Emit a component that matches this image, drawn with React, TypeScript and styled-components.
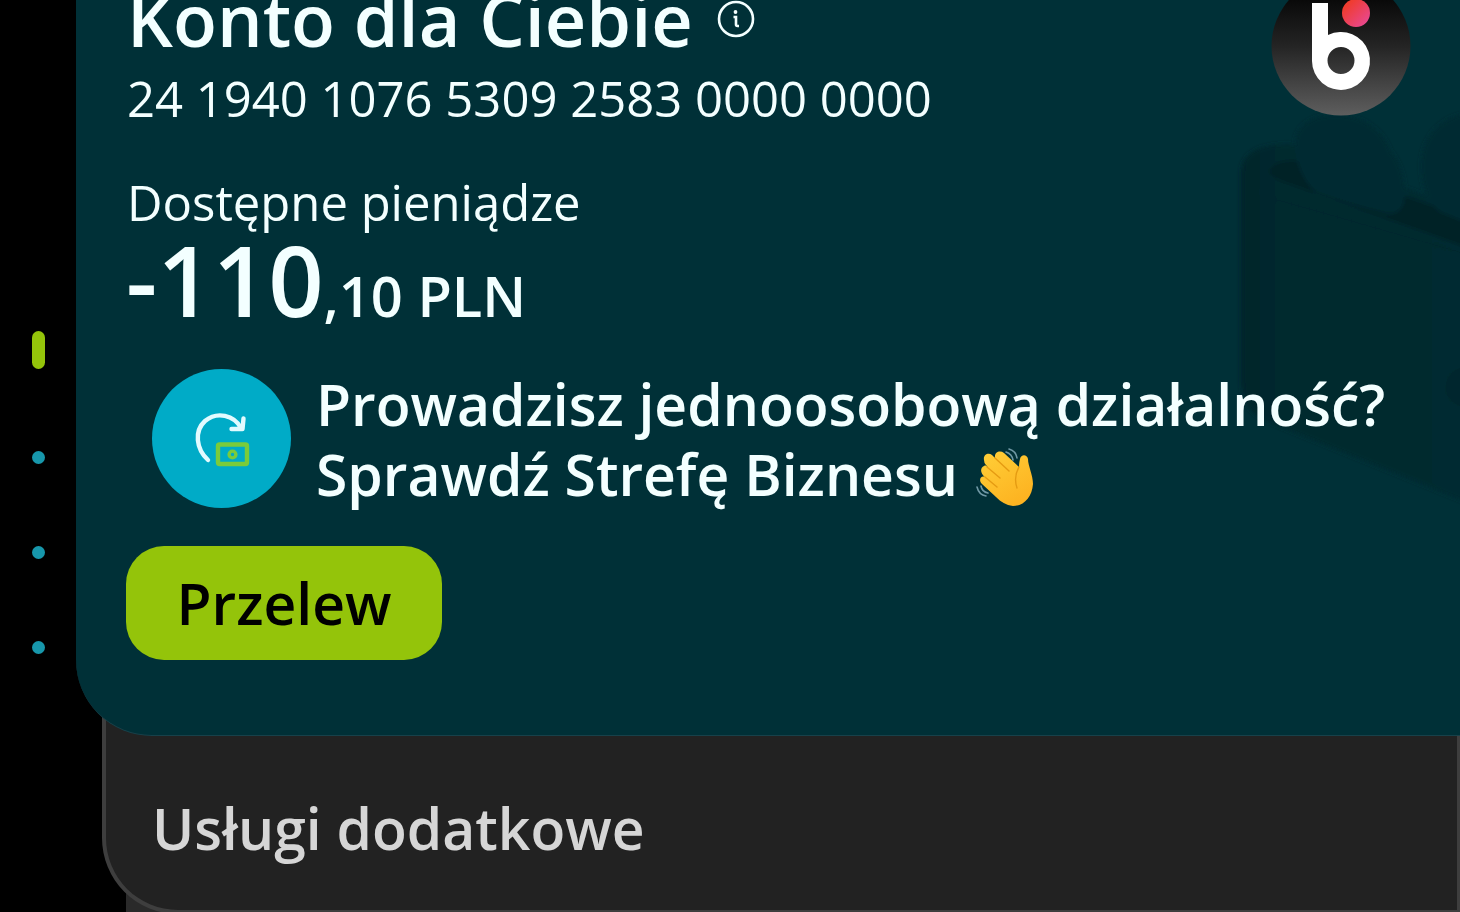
import React from "react";
import styled, { createGlobalStyle } from "styled-components";

const GlobalStyle = createGlobalStyle`
  * { box-sizing: border-box; }
  body {
    margin: 0;
    background: #000;
    font-family: "Open Sans", "Noto Sans", sans-serif;
    color: #f3ffff;
  }
`;

const Page = styled.div`
  display: flex;
  overflow: hidden;
`;

const Rail = styled.nav`
  flex: 0 0 76px;
  display: flex;
  flex-direction: column;
  align-items: center;
  gap: 82px;
  padding-top: 331px;
`;

const PageDot = styled.button<{ $active?: boolean }>`
  width: 13px;
  height: ${(p) => (p.$active ? 38 : 13)}px;
  padding: 0;
  border: 0;
  border-radius: 7px;
  background: ${(p) => (p.$active ? "#94c40a" : "#1797ab")};
`;

const Stack = styled.main`
  flex: 1;
  min-width: 0;
  display: flex;
  flex-direction: column;
`;

const AccountCard = styled.section`
  position: relative;
  z-index: 2;
  padding: 0 49px 75px 50px;
  background: #003037;
  border-bottom: 1px solid #17414a;
  border-bottom-left-radius: 76px;
`;

const Backdrop = styled.svg`
  position: absolute;
  z-index: -1;
  right: 0;
  top: 100px;
  width: 230px;
  height: 420px;
`;

const Header = styled.header`
  display: flex;
  justify-content: space-between;
  align-items: flex-start;
`;

const AccountInfo = styled.div`
  padding-left: 1px;
`;

const TitleRow = styled.div`
  display: flex;
  align-items: center;
  gap: 24px;
`;

const Title = styled.h1`
  margin: 0;
  font-size: 72px;
  line-height: 38px;
  font-weight: 600;
  white-space: nowrap;
`;

const InfoButton = styled.button`
  display: flex;
  padding: 0;
  border: 0;
  background: none;
  color: inherit;
`;

const AccountNumber = styled.p`
  margin: 32px 0 0;
  font-size: 49px;
  line-height: 56px;
`;

const BalanceLabel = styled.p`
  margin: 48px 0 0;
  padding-left: 1px;
  font-size: 49px;
  line-height: 56px;
`;

const Balance = styled.p`
  margin: 0;
  font-size: 97px;
  line-height: 98px;
  font-weight: 600;
`;

const Cents = styled.span`
  font-size: 56px;
  line-height: 56px;
`;

const Notice = styled.a`
  display: flex;
  gap: 25px;
  margin: 41px 0 38px;
  padding-left: 26px;
  color: inherit;
  text-decoration: none;
  font-size: 57px;
  line-height: 70px;
  font-weight: 600;
`;

const NoticeIcon = styled.span`
  flex: 0 0 139px;
  height: 139px;
  border-radius: 50%;
  background: #00abc7;
`;

const NoticeText = styled.span`
  flex: 1;
  height: 139px;
  white-space: nowrap;
`;

const Wave = styled.svg`
  width: 64px;
  height: 64px;
  vertical-align: -14px;
`;

const TransferButton = styled.button`
  display: block;
  width: 316px;
  height: 114px;
  padding: 0;
  border: 0;
  border-radius: 38px;
  background: #94c40a;
  color: #000;
  font: 600 57px/68px "Open Sans", "Noto Sans", sans-serif;
`;

const ServicesCard = styled.section`
  position: relative;
  z-index: 1;
  margin: -80px 0 0 26px;
  padding: 134px 46px 48px;
  border: 4px solid #3e3e3e;
  border-right-width: 3px;
  border-bottom-left-radius: 76px;
  background: #222;
`;

const ServicesTitle = styled.h2`
  margin: 0;
  color: #d6d6d6;
  font-size: 57px;
  line-height: 68px;
  font-weight: 600;
`;

const NextCard = styled.div`
  height: 82px;
  margin: -80px 0 0 50px;
  background: #2a2a2a;
`;

function ProductBackdrop() {
  return (
    <Backdrop viewBox="1230 100 230 420" aria-hidden="true">
      <defs>
        <linearGradient id="box" x1="0" x2="1" y1="0" y2="0">
          <stop offset="0" stopColor="#00242a" />
          <stop offset=".06" stopColor="#00262c" />
          <stop offset=".16" stopColor="#00292f" />
          <stop offset="1" stopColor="#002a30" />
        </linearGradient>
        <filter id="soft"><feGaussianBlur stdDeviation="2" /></filter>
      </defs>
      <g filter="url(#soft)">
        <path d="M1241 173Q1241 144 1290 144L1480 216V508L1266 421Q1241 411 1241 380Z" fill="url(#box)" />
        <path d="M1256 194Q1300 206 1480 258" stroke="#00272d" strokeWidth="2" fill="none" />
        <path d="M1270 170Q1276 158 1304 162L1480 222V252L1290 184Q1268 177 1270 170Z" fill="#002228" />
        <path d="M1295 142C1297 122 1316 114 1338 115C1366 116 1384 132 1391 152C1399 160 1408 182 1404 202Q1401 214 1388 214Q1352 205 1316 192C1302 180 1295 162 1295 142Z" fill="#002c33" />
        <path d="M1480 112C1440 112 1421 138 1421 166C1421 186 1428 202 1440 212L1480 228Z" fill="#002c33" />
        <ellipse cx="1468" cy="387" rx="22" ry="20" fill="#00272d" />
      </g>
    </Backdrop>
  );
}

function BrandLogo() {
  return (
    <svg width="140" height="116" viewBox="0 24 140 116" role="img" aria-label="BLIK">
      <defs>
        <linearGradient id="disc" x1="0" x2="0" y1="0" y2="1">
          <stop offset=".15" stopColor="#080808" />
          <stop offset=".5" stopColor="#242424" />
          <stop offset="1" stopColor="#5e5e5e" />
        </linearGradient>
        <linearGradient id="spot" x1="0" x2="1" y1="0" y2="1">
          <stop offset=".2" stopColor="#ef3c2f" />
          <stop offset="1" stopColor="#e84aa0" />
        </linearGradient>
      </defs>
      <circle cx="70" cy="70" r="69.5" fill="url(#disc)" />
      <path d="M41 27H57V59A29 29 0 1 1 41 85ZM70 71A13.5 13.5 0 1 0 70 98A13.5 13.5 0 1 0 70 71Z" fill="#fff" fillRule="evenodd" />
      <circle cx="85" cy="37" r="14" fill="url(#spot)" />
    </svg>
  );
}

function InfoIcon() {
  return (
    <svg width="38" height="38" viewBox="0 0 38 38" fill="none" stroke="currentColor" aria-hidden="true">
      <circle cx="19" cy="19" r="17" strokeWidth="2.6" />
      <circle cx="18.5" cy="12" r="1.9" fill="currentColor" stroke="none" />
      <path d="M16.5 17H19V24.5Q19 26 20.5 26H22" strokeWidth="2.6" />
    </svg>
  );
}

function RefreshMoneyIcon() {
  return (
    <svg width="139" height="139" viewBox="0 0 139 139" fill="none" strokeLinecap="round" strokeLinejoin="round" aria-hidden="true">
      <path d="M56 91C44 80 42 62 53 52C65 42 82 46 89 59" stroke="#e2fbff" strokeWidth="4.4" />
      <path d="M79.5 60H90.5L91.5 49.5" stroke="#e2fbff" strokeWidth="4.4" />
      <rect x="66" y="75.5" width="29" height="19.5" rx="1.5" stroke="#7acb3b" strokeWidth="4.4" />
      <circle cx="80.5" cy="85.5" r="3.4" stroke="#7acb3b" strokeWidth="3.4" />
    </svg>
  );
}

function WavingHand() {
  return (
    <Wave viewBox="974 443 64 64" fill="none" strokeLinecap="round" strokeLinejoin="round" role="img" aria-label="Machająca dłoń">
      <defs>
        <linearGradient id="skin" x1="0" y1="0" x2=".6" y2="1">
          <stop offset="0" stopColor="#ffcf38" />
          <stop offset="1" stopColor="#fdb321" />
        </linearGradient>
      </defs>
      <path
        d="M985 457C984 452 989 449 993 452L996 455C995 449 1001 447 1005 450L1020 464C1020 463 1020 460 1021 456C1022 451 1028 451 1029 456C1029 463 1034 472 1034 481C1033 494 1025 503 1014 503C1007 502 1002 499 997 494L983 481C979 477 982 472 986 474C981 470 981 465 985 463C987 462 987 463 989 464L987 462Q985 460 985 457Z"
        fill="url(#skin)"
      />
      <path d="M988 464L1001 475M986 474L998 484M996 455L1010 468M1020 464C1016 471 1016 479 1018 485" stroke="#e59b12" strokeWidth="1.4" />
      <path d="M1007 449Q1013 451 1014 457M1010 446Q1017 448 1018 455M982 483Q983 489 989 490M978 484Q980 492 987 493" stroke="#6f98a5" strokeWidth="1.6" />
    </Wave>
  );
}

export default function App() {
  return (
    <>
      <GlobalStyle />
      <Page>
        <Rail aria-label="Produkty">
          <PageDot $active aria-label="Produkt 1" />
          <PageDot aria-label="Produkt 2" />
          <PageDot aria-label="Produkt 3" />
          <PageDot aria-label="Produkt 4" />
        </Rail>
        <Stack>
          <AccountCard>
            <ProductBackdrop />
            <Header>
              <AccountInfo>
                <TitleRow>
                  <Title>Konto dla Ciebie</Title>
                  <InfoButton aria-label="Informacje o koncie">
                    <InfoIcon />
                  </InfoButton>
                </TitleRow>
                <AccountNumber>24 1940 1076 5309 2583 0000 0000</AccountNumber>
              </AccountInfo>
              <BrandLogo />
            </Header>
            <BalanceLabel>Dostępne pieniądze</BalanceLabel>
            <Balance>
              -110<Cents>,10 PLN</Cents>
            </Balance>
            <Notice href="#biznes">
              <NoticeIcon>
                <RefreshMoneyIcon />
              </NoticeIcon>
              <NoticeText>
                Prowadzisz jednoosobową działalność?
                <br />
                Sprawdź Strefę Biznesu <WavingHand />
              </NoticeText>
            </Notice>
            <TransferButton>Przelew</TransferButton>
          </AccountCard>
          <ServicesCard>
            <ServicesTitle>Usługi dodatkowe</ServicesTitle>
          </ServicesCard>
          <NextCard />
        </Stack>
      </Page>
    </>
  );
}
